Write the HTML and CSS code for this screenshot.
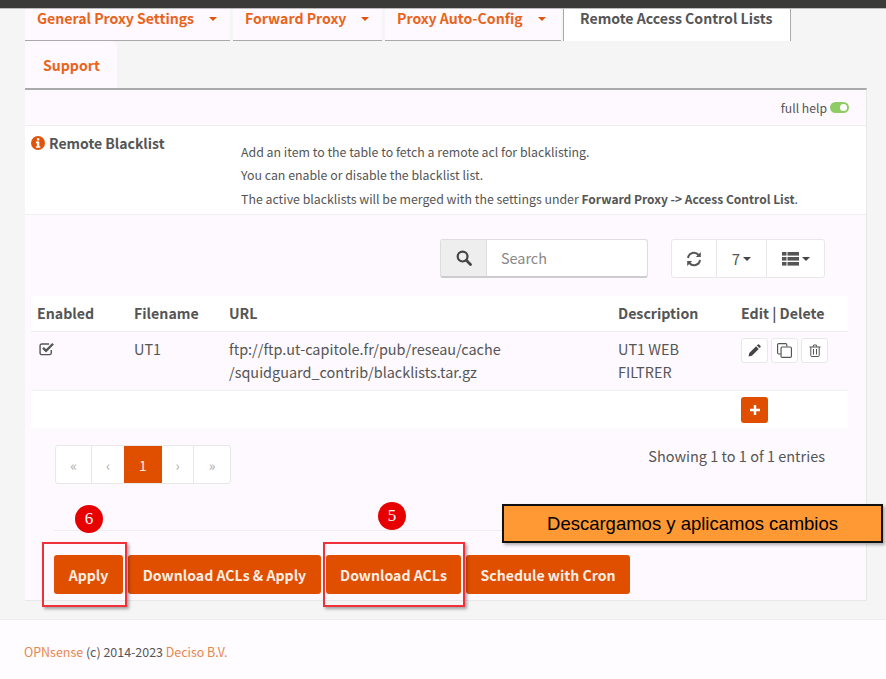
FILE: index.html
```html
<!DOCTYPE html>
<html lang="en">
<head>
    <meta charset="UTF-8">
    <meta name="viewport" content="width=device-width, initial-scale=1.0">
    <title>Remote Access Control Lists</title>
    <link rel="stylesheet" href="styles.css">
</head>
<body>
    <div class="topbar"></div>

    <div class="content">
        <ul class="tabs">
            <li class="tab tab-general"><a>General Proxy Settings</a><span class="caret"></span></li>
            <li class="tab tab-forward"><a>Forward Proxy</a><span class="caret"></span></li>
            <li class="tab tab-pac"><a>Proxy Auto-Config</a><span class="caret"></span></li>
            <li class="tab tab-active"><a>Remote Access Control Lists</a></li>
            <li class="tab tab-support"><a>Support</a></li>
        </ul>

        <div class="panel">
            <div class="help-toggle">
                <span>full help</span>
                <span class="switch"></span>
            </div>

            <div class="help-row">
                <div class="help-title">
                    <svg class="icon-info" viewBox="0 0 14 14"><circle cx="7" cy="7" r="7" fill="#e0530a"/><rect x="5.9" y="2.2" width="2.4" height="2.3" fill="#fff"/><path d="M4.9 5.6h3.4v4.6h1v1.6H4.9v-1.6h1V7.2h-1z" fill="#fff"/></svg>
                    <span>Remote Blacklist</span>
                </div>
                <div class="help-text">
                    <p>Add an item to the table to fetch a remote acl for blacklisting.</p>
                    <p>You can enable or disable the blacklist list.</p>
                    <p>The active blacklists will be merged with the settings under <b>Forward Proxy -&gt; Access Control List</b>.</p>
                </div>
            </div>

            <div class="grid-area">
                <div class="toolbar">
                    <div class="search">
                        <span class="search-icon">
                            <svg viewBox="0 0 16 16" width="16" height="16"><circle cx="6.6" cy="6.6" r="4.9" fill="none" stroke="#444" stroke-width="2.2"/><path d="M10.3 10.3l4.2 4.2" stroke="#444" stroke-width="2.8" stroke-linecap="round"/></svg>
                        </span>
                        <span class="search-input">Search</span>
                    </div>
                    <div class="btn-group">
                        <span class="tool tool-refresh">
                            <svg viewBox="0 0 16 16" width="16" height="16" fill="none" stroke="#555" stroke-width="2"><path d="M2 7a6 6 0 0 1 10.6-3"/><path d="M14 9a6 6 0 0 1-10.6 3"/><path d="M14.8 1v5h-5z" fill="#555" stroke="none"/><path d="M1.2 15v-5h5z" fill="#555" stroke="none"/></svg>
                        </span>
                        <span class="tool tool-count">7<span class="caret caret-dark"></span></span>
                        <span class="tool tool-cols">
                            <svg viewBox="0 0 17 14" width="17" height="14" fill="#555"><rect y="0" width="4.5" height="3.6"/><rect x="5.5" y="0" width="11.5" height="3.6"/><rect y="5" width="4.5" height="3.6"/><rect x="5.5" y="5" width="11.5" height="3.6"/><rect y="10" width="4.5" height="3.6"/><rect x="5.5" y="10" width="11.5" height="3.6"/></svg>
                            <span class="caret caret-dark"></span>
                        </span>
                    </div>
                </div>

                <table class="grid">
                    <thead>
                        <tr>
                            <th class="col-enabled">Enabled</th>
                            <th class="col-file">Filename</th>
                            <th class="col-url">URL</th>
                            <th class="col-desc">Description</th>
                            <th>Edit | Delete</th>
                        </tr>
                    </thead>
                    <tbody>
                        <tr class="row-data">
                            <td>
                                <svg class="icon-check" viewBox="0 0 15 13" width="16" height="14" fill="none" stroke="#555"><path d="M11.5 7.5v2.7a1.6 1.6 0 0 1-1.6 1.6H2.6A1.6 1.6 0 0 1 1 10.200V3.400a1.600 1.600 0 0 1 1.600-1.600h6.900" stroke-width="1.300"/><path d="M3.800 5.400l2.800 2.800 6.600-6.600" stroke-width="2.200"/></svg>
                            </td>
                            <td>UT1</td>
                            <td>ftp://ftp.ut-capitole.fr/pub/reseau/cache<br>/squidguard_contrib/blacklists.tar.gz</td>
                            <td>UT1 WEB<br>FILTRER</td>
                            <td>
                                <div class="row-actions">
                                    <span class="btn-xs">
                                        <svg viewBox="0 0 12 12" width="13" height="13" fill="#444"><path d="M0.500 11.500l0.700-3.100 6.300-6.300 2.400 2.400-6.300 6.300z"/><path d="M8.200 1.400l0.900-0.900a0.800 0.800 0 0 1 1.100 0l1.300 1.300a0.800 0.800 0 0 1 0 1.100l-0.900 0.900z"/></svg>
                                    </span>
                                    <span class="btn-xs">
                                        <svg viewBox="0 0 13 13" width="15" height="15" fill="none" stroke="#555" stroke-width="1"><path d="M3.500 9.500H1.500a1 1 0 0 1-1-1V1.500a1 1 0 0 1 1-1h6a1 1 0 0 1 1 1v1.500"/><rect x="3.500" y="3.500" width="9" height="9" rx="1"/></svg>
                                    </span>
                                    <span class="btn-xs">
                                        <svg viewBox="0 0 12 13" width="12" height="13" fill="none" stroke="#555" stroke-width="1"><path d="M0.500 3h11"/><path d="M4 3l0.700-2h2.600L8 3"/><path d="M1.800 3v8.500a1 1 0 0 0 1 1h6.400a1 1 0 0 0 1-1V3"/><path d="M4.500 5v5.500M7.500 5v5.500"/></svg>
                                    </span>
                                </div>
                            </td>
                        </tr>
                        <tr class="row-add">
                            <td colspan="4"></td>
                            <td>
                                <span class="btn-add">
                                    <svg viewBox="0 0 10 10" width="10" height="10" fill="#fff"><path d="M3.800 0h2.400v3.800H10v2.400H6.200V10H3.800V6.200H0V3.800h3.800z"/></svg>
                                </span>
                            </td>
                        </tr>
                    </tbody>
                </table>

                <div class="grid-footer">
                    <ul class="pagination">
                        <li class="page-narrow">&laquo;</li>
                        <li class="page-narrow">&lsaquo;</li>
                        <li class="page-current">1</li>
                        <li class="page-narrow">&rsaquo;</li>
                        <li class="page-narrow">&raquo;</li>
                    </ul>
                    <div class="infos">Showing 1 to 1 of 1 entries</div>
                </div>

                <div class="actions">
                    <button class="btn btn-apply">Apply</button>
                    <button class="btn btn-both">Download ACLs &amp; Apply</button>
                    <button class="btn btn-download">Download ACLs</button>
                    <button class="btn btn-cron">Schedule with Cron</button>
                </div>
            </div>
        </div>
    </div>

    <footer class="footer">
        <a>OPNsense</a> (c) 2014-2023 <a>Deciso B.V.</a>
    </footer>

    <!-- annotations drawn over the screenshot -->
    <div class="mark mark-apply"></div>
    <div class="mark mark-download"></div>
    <div class="step step-six">6</div>
    <div class="step step-five">5</div>
    <div class="callout">Descargamos y aplicamos cambios</div>
</body>
</html>
```

FILE: styles.css
```css
* {
    box-sizing: border-box;
}

html,
body {
    height: 100%;
}

body {
    position: relative;
    display: flex;
    flex-direction: column;
    margin: 0;
    overflow: hidden;
    background-color: #f5f5f5;
    color: #555;
    font-family: "Noto Sans CJK SC", "Open Sans", sans-serif;
    font-size: 14px;
    line-height: 20px;
}

.topbar {
    height: 9px;
    background-color: #3a3a38;
    border-bottom: 1px solid #bbb;
}

.content {
    padding: 0 19px 0 25px;
}

/* tabs */
.tabs {
    display: flex;
    flex-wrap: wrap;
    margin: 0;
    padding: 0;
    list-style: none;
}

.tab {
    display: flex;
    align-items: center;
    height: 32px;
    margin-right: 3px;
    padding: 0 12px;
    background-color: #fdf9fe;
    border-bottom: 1px solid #aaa;
    color: #e8641b;
    font-size: 14.1px;
    font-weight: 700;
    white-space: nowrap;
}

.tab a {
    position: relative;
    top: -7px;
}

.tab .caret {
    position: relative;
    top: -6px;
    margin-left: 15px;
}

.tab-general {
    width: 205px;
}

.tab-forward {
    width: 149px;
}

.tab-pac {
    width: 176px;
    margin-right: 2px;
}

.tab-active {
    width: 228px;
    padding-left: 16px;
    background-color: #fff;
    border-left: 1px solid #aaa;
    border-right: 1px solid #aaa;
    border-bottom: 0;
    color: #555;
    margin-right: 70px;
}

.tab-support {
    width: 92px;
    height: 47px;
    padding-left: 18px;
    border-bottom: 0;
    border-top-right-radius: 6px;
}

.tab-support a {
    top: 0;
}

.caret {
    display: inline-block;
    width: 0;
    height: 0;
    border-top: 4px solid #e0530a;
    border-left: 4px solid transparent;
    border-right: 4px solid transparent;
}

.caret-dark {
    border-top-color: #444;
    margin-left: 3px;
}

/* panel */
.panel {
    border-top: 2px solid #aaa;
    border-right: 1px solid #e8e8e8;
    border-bottom: 1px solid #e8e8e8;
    background-color: #fdf9fe;
}

.help-toggle {
    display: flex;
    justify-content: flex-end;
    align-items: center;
    gap: 3px;
    height: 35px;
    padding-right: 17px;
    font-size: 12.2px;
}

.switch {
    position: relative;
    width: 19px;
    height: 11px;
    border-radius: 6px;
    background-color: #8fcc66;
}

.switch::after {
    content: "";
    position: absolute;
    top: 2px;
    right: 2px;
    width: 7px;
    height: 7px;
    border-radius: 50%;
    background-color: #fff;
}

.help-row {
    display: flex;
    height: 90px;
    background-color: #fff;
    border-top: 1px solid #f0eef0;
    border-bottom: 1px solid #f0eef0;
}

.help-title {
    display: flex;
    align-items: flex-start;
    gap: 4px;
    width: 216px;
    padding: 7px 0 0 6px;
    font-size: 14px;
    font-weight: 700;
}

.icon-info {
    width: 14px;
    height: 14px;
    margin-top: 3px;
    flex: none;
}

.help-text {
    padding-top: 15px;
    font-size: 12.35px;
    line-height: 23px;
}

.help-text p {
    margin: 0;
}

.help-text b {
    font-size: 12px;
}

/* grid */
.grid-area {
    padding-top: 24px;
}

.toolbar {
    display: flex;
    justify-content: flex-end;
    gap: 24px;
    padding-right: 41px;
}

.search {
    display: flex;
    width: 208px;
    height: 39px;
    margin-right: -1px;
    background-color: #fff;
    border: 1px solid #ddd;
    border-bottom: 2px solid #ccc;
    border-radius: 3px;
}

.search-icon {
    display: flex;
    justify-content: center;
    align-items: center;
    width: 46px;
    background-color: #eee;
    border-right: 1px solid #ddd;
}

.search-input {
    align-self: center;
    padding-left: 14px;
    color: #888;
    font-size: 14.4px;
}

.btn-group {
    display: flex;
    height: 39px;
    background-color: #fff;
    border: 1px solid #e8e8e8;
    border-radius: 3px;
}

.tool {
    display: flex;
    justify-content: center;
    align-items: center;
    border-right: 1px solid #e8e8e8;
    font-size: 15px;
}

.tool-refresh {
    width: 45px;
}

.tool-count {
    width: 50px;
}

.tool-cols {
    width: 57px;
    border-right: 0;
}

.grid {
    width: 817px;
    margin: 18px 0 0 6px;
    border-collapse: collapse;
    table-layout: fixed;
    font-size: 14.45px;
}

.col-enabled {
    width: 97px;
}

.col-file {
    width: 95px;
}

.col-url {
    width: 389px;
}

.col-desc {
    width: 123px;
}

.grid th,
.grid td {
    padding: 0 6px;
    text-align: left;
    vertical-align: top;
}

.grid thead tr {
    height: 35px;
    background-color: #fff;
    border-bottom: 1px solid #f0eef0;
}

.grid th {
    padding-top: 7px;
    font-size: 14.2px;
    font-weight: 700;
}

.row-data {
    height: 59px;
    border-bottom: 1px solid #f0eef0;
}

.row-data td {
    padding-top: 5px;
    line-height: 23px;
}

.icon-check {
    display: block;
    margin: 5px 0 0 2px;
}

.row-actions {
    display: flex;
    gap: 3px;
}

.btn-xs {
    display: flex;
    justify-content: center;
    align-items: center;
    width: 27px;
    height: 25px;
    margin-top: 1px;
    background-color: #fff;
    border: 1px solid #e8e8e8;
    border-radius: 3px;
}

.row-add {
    height: 38px;
    background-color: #fff;
}

.row-add td {
    padding-top: 6px;
}

.btn-add {
    display: flex;
    justify-content: center;
    align-items: center;
    width: 27px;
    height: 26px;
    background-color: #e04f00;
    border-radius: 3px;
}

.grid-footer {
    display: flex;
    justify-content: space-between;
    margin-top: 17px;
    padding: 0 41px 0 30px;
}

.pagination {
    display: flex;
    height: 39px;
    margin: 0;
    padding: 0;
    list-style: none;
    background-color: #fff;
    border: 1px solid #e8e8e8;
    border-radius: 3px;
}

.pagination li {
    display: flex;
    justify-content: center;
    align-items: center;
    font-size: 14px;
}

.page-narrow {
    width: 36px;
    border-right: 1px solid #e8e8e8;
    color: #aaa;
}

.page-narrow:nth-child(2) {
    width: 32px;
    border-right: 0;
}

.page-narrow:nth-child(4) {
    width: 32px;
}

.page-narrow:last-child {
    border-right: 0;
}

.pagination .page-current {
    width: 38px;
    background-color: #e04f00;
    color: #ffe9dc;
}

.infos {
    padding-top: 1px;
    font-size: 14.5px;
}

.actions {
    display: flex;
    margin: 46px 0 0 29px;
    padding: 24px 0 6px;
    border-top: 1px solid #f0eef0;
}

.btn {
    height: 39px;
    padding: 0;
    border: 0;
    border-radius: 3px;
    background-color: #e04f00;
    color: #fdeee4;
    font-family: inherit;
    font-size: 14.1px;
    font-weight: 700;
}

.btn-apply {
    width: 69px;
    margin-right: 5px;
}

.btn-both {
    width: 193px;
    margin-right: 5px;
}

.btn-download {
    width: 135px;
    margin-right: 5px;
}

.btn-cron {
    width: 164px;
}

/* footer */
.footer {
    flex: 1;
    margin-top: 18px;
    padding: 22px 0 0 24px;
    background-color: #fefcff;
    border-top: 1px solid #ececec;
    font-size: 12.45px;
}

.footer a {
    color: #e8864f;
}

/* annotations */
.mark {
    position: absolute;
    top: 542px;
    height: 65px;
    border: 2px solid #f0303a;
    box-shadow: 2px 2px 3px rgba(0, 0, 0, 0.35);
}

.mark-apply {
    left: 42px;
    width: 85px;
}

.mark-download {
    left: 323px;
    width: 142px;
}

.step {
    position: absolute;
    width: 28px;
    height: 28px;
    border-radius: 50%;
    background-color: #e60000;
    color: #fff;
    font-family: "Liberation Serif", serif;
    font-size: 17px;
    line-height: 28px;
    text-align: center;
}

.step-six {
    left: 75px;
    top: 505px;
}

.step-five {
    left: 378px;
    top: 502px;
}

.callout {
    position: absolute;
    left: 502px;
    top: 504px;
    width: 381px;
    height: 39px;
    background-color: #ff9933;
    border: 2px solid #111;
    box-shadow: 2px 2px 3px rgba(0, 0, 0, 0.3);
    color: #000;
    font-family: "Liberation Sans", Arial, sans-serif;
    font-size: 18.5px;
    line-height: 35px;
    text-align: center;
}
```
